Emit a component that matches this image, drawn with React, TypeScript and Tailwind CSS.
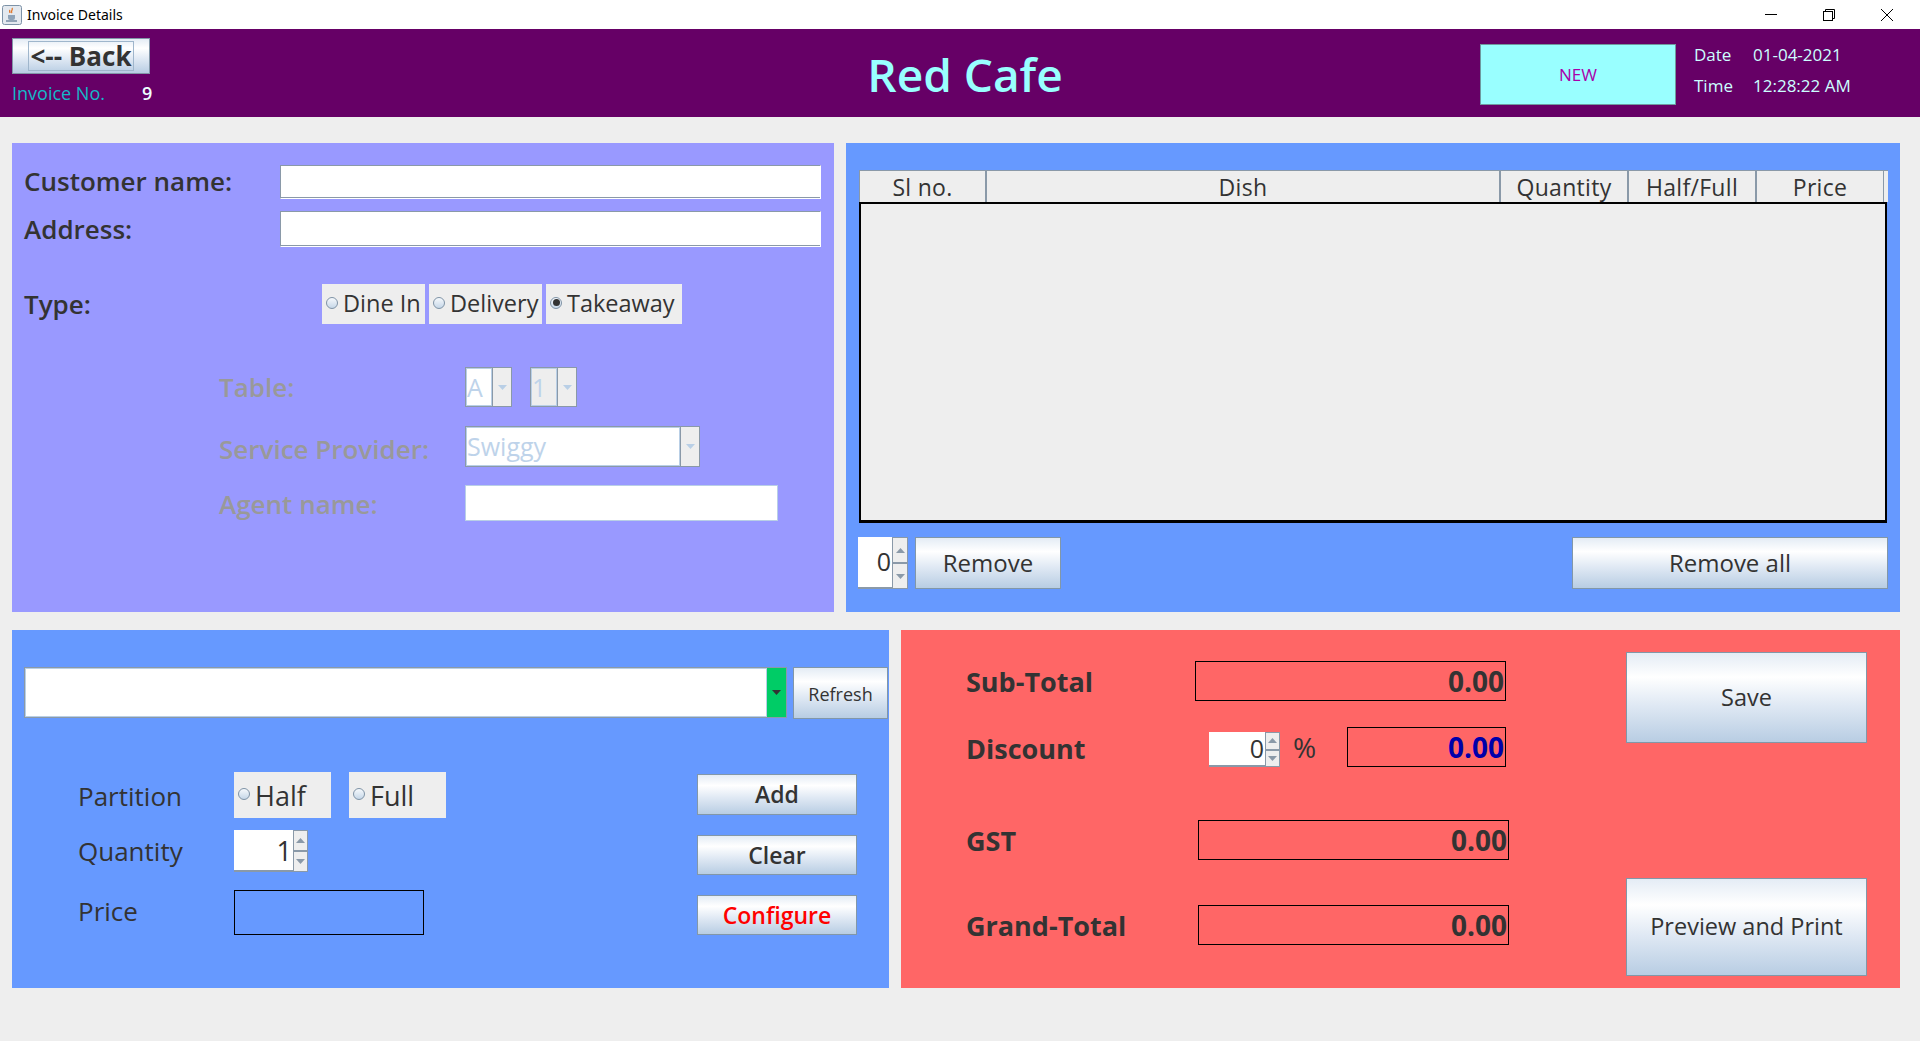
import type { ReactNode } from "react";

const glossy =
  "bg-[linear-gradient(180deg,#e4ecf5_0%,#ffffff_27%,#e0e9f4_58%,#b8cde3_100%)] border border-[#8297a8]";

const Btn = ({ className, children }: { className: string; children: ReactNode }) => (
  <div className={`${glossy} flex items-center justify-center text-[#333333] whitespace-nowrap ${className}`}>{children}</div>
);

const Arrow = ({ up, color = "#8a99a8" }: { up?: boolean; color?: string }) => (
  <svg width="9" height="5" viewBox="0 0 9 5" className="block">
    <path d={up ? "M0 5 L4.5 0 L9 5 Z" : "M0 0 L9 0 L4.5 5 Z"} fill={color} />
  </svg>
);

const Radio = ({ checked }: { checked?: boolean }) => (
  <span className="w-[12px] h-[12px] rounded-full border border-[#7f93a6] bg-[linear-gradient(180deg,#f6f9fc,#c6d7e8)] flex items-center justify-center shrink-0 -mt-[3px]">
    {checked && <span className="w-[7px] h-[7px] rounded-full bg-[#333333]" />}
  </span>
);

const RadioBox = ({ label, className, checked }: { label: string; className: string; checked?: boolean }) => (
  <div className={`bg-[#eeeeee] flex items-center pl-[4px] gap-[5px] text-[#333333] whitespace-nowrap ${className}`}>
    <Radio checked={checked} />
    <span>{label}</span>
  </div>
);

const Spinner = ({ value, className, text, btn }: { value: string; className: string; text: string; btn: string }) => (
  <div className={`flex ${className}`}>
    <div className={`flex-1 bg-white border-b-2 border-b-[#8a99a8] flex items-center justify-end pr-[1px] text-[#333333] ${text}`}>
      {value}
    </div>
    <div className={`${btn} flex flex-col bg-[#eeeeee] border border-[#8a99a8]`}>
      <div className="flex-1 flex items-center justify-center border-b-2 border-b-[#8a99a8]">
        <Arrow up />
      </div>
      <div className="flex-1 flex items-center justify-center">
        <Arrow />
      </div>
    </div>
  </div>
);

const Combo = ({ value, className, grey }: { value: string; className: string; grey?: boolean }) => (
  <div className={`flex border border-[#8a99a8] text-[#bed3ea] text-[25px] font-normal leading-none ${className}`}>
    <div className={`flex-1 border border-[#b9cfe6] flex items-center ${grey ? "bg-[#eeeeee]" : "bg-white"}`}>{value}</div>
    <div className="w-[19px] bg-[#eeeeee] border-l border-[#8a99a8] flex items-center justify-center">
      <Arrow color="#b9cfe6" />
    </div>
  </div>
);

const Amount = ({ value, className, blue }: { value: string; className: string; blue?: boolean }) => (
  <div
    className={`border border-black h-[40px] flex items-center justify-end pr-[1px] text-[28px] font-bold leading-none ${blue ? "text-[#0000aa]" : "text-[#333333]"} ${className}`}
  >
    {value}
  </div>
);

const Field = ({ className }: { className: string }) => (
  <div className={`bg-white border border-white border-t-[#8a99a8] border-l-[#8a99a8] shadow-[inset_0_-1px_0_#8a99a8] ${className}`} />
);

const columns = [
  { name: "Sl no.", w: "w-[127px]" },
  { name: "Dish", w: "w-[514px]" },
  { name: "Quantity", w: "w-[128px]" },
  { name: "Half/Full", w: "w-[128px]" },
  { name: "Price", w: "w-[128px]" },
];

export default function App() {
  return (
    <div className="w-[1920px] h-[1041px] overflow-hidden bg-[#eeeeee] font-['Open_Sans',sans-serif] flex flex-col">
      {/* Window title bar */}
      <div className="h-[29px] bg-white flex items-center pl-[2px] pr-[4px]">
        <svg width="20" height="20" viewBox="0 0 20 20">
          <rect x="0.5" y="0.5" width="19" height="19" rx="2" fill="#e4e9ef" stroke="#7e93a8" />
          <path d="M6 10h7v3a2 2 0 0 1-2 2H8a2 2 0 0 1-2-2z" fill="#8fa3b8" />
          <path d="M4 16h11" stroke="#5b7690" strokeWidth="1.2" />
          <path d="M10 3c1.5 2-2 3 0 5M8 5c-1 1 0 2 0 3" stroke="#e0762a" strokeWidth="1.3" fill="none" />
        </svg>
        <span className="ml-[5px] font-['Noto_Sans',sans-serif] text-[14px] leading-none text-black">Invoice Details</span>
        <div className="ml-auto flex items-center h-full">
          <div className="w-[58px] flex justify-center">
            <svg width="12" height="12" viewBox="0 0 12 12"><path d="M0 5.5h12" stroke="#000" /></svg>
          </div>
          <div className="w-[58px] flex justify-center">
            <svg width="12" height="12" viewBox="0 0 12 12" fill="none" stroke="#000">
              <rect x="0.5" y="2.5" width="9" height="9" />
              <path d="M2.5 2.5v-2h9v9h-2" />
            </svg>
          </div>
          <div className="w-[58px] flex justify-center">
            <svg width="12" height="12" viewBox="0 0 12 12"><path d="M0 0l12 12M12 0L0 12" stroke="#000" /></svg>
          </div>
        </div>
      </div>

      {/* Purple header */}
      <div className="h-[88px] bg-[#660066] flex">
        <div className="w-[460px] pl-[12px] pt-[9px] flex flex-col">
          <Btn className="w-[138px] h-[36px] text-[26px] font-bold leading-none">
            <span className="border border-[#9fb6cc] w-[106px] h-[30px] flex items-center justify-center whitespace-nowrap">&lt;-- Back</span>
          </Btn>
          <div className="flex mt-[7px] text-[18px] leading-[24px]">
            <span className="w-[130px] text-[#14b8c8]">Invoice No.</span>
            <span className="text-[#eeffff] font-semibold">9</span>
          </div>
        </div>
        <div className="w-[1010px] flex items-center justify-center text-[46px] font-semibold text-[#99ffff] leading-none pt-[2px]">
          Red Cafe
        </div>
        <div className="ml-[10px] mt-[15px] w-[196px] h-[61px] bg-[#99ffff] border border-[#6f9a9f] flex items-center justify-center text-[#aa00aa] text-[17px]">
          NEW
        </div>
        <div className="ml-[18px] mt-[10px] text-[#ccffff] text-[17px] leading-[31px] font-medium">
          <div className="flex">
            <span className="w-[59px]">Date</span>
            <span>01-04-2021</span>
          </div>
          <div className="flex">
            <span className="w-[59px]">Time</span>
            <span>12:28:22 AM</span>
          </div>
        </div>
      </div>

      <div className="flex-1 pl-[12px] pt-[26px]">
        {/* Top row */}
        <div className="flex gap-[12px] h-[469px]">
          <div className="w-[822px] bg-[#9999ff] pt-[22px] text-[26px] leading-none font-semibold text-[#333333]">
            <div className="flex items-center h-[34px] pl-[12px]">
              <span className="w-[256px] pb-[3px]">Customer name:</span>
              <Field className="w-[541px] h-full" />
            </div>
            <div className="flex items-center h-[36px] mt-[12px] pl-[12px]">
              <span className="w-[256px]">Address:</span>
              <Field className="w-[541px] h-full" />
            </div>
            <div className="flex items-center h-[40px] mt-[37px] pl-[12px]">
              <span className="w-[298px]">Type:</span>
              <div className="flex gap-[4px] text-[23.5px] font-normal">
                <RadioBox label="Dine In" className="w-[103px] h-[40px]" />
                <RadioBox label="Delivery" className="w-[113px] h-[40px]" />
                <RadioBox label="Takeaway" className="w-[136px] h-[40px]" checked />
              </div>
            </div>
            <div className="flex items-center h-[40px] mt-[43px] pl-[207px] text-[#999999]">
              <span className="w-[246px]">Table:</span>
              <Combo value="A" className="w-[47px] h-full" />
              <Combo value="1" className="w-[47px] h-full ml-[18px]" grey />
            </div>
            <div className="flex items-center h-[41px] mt-[19px] pl-[207px] text-[#999999]">
              <span className="w-[246px] whitespace-nowrap pt-[4px]">Service Provider:</span>
              <Combo value="Swiggy" className="w-[235px] h-full" />
            </div>
            <div className="flex items-center h-[36px] mt-[18px] pl-[207px] text-[#999999]">
              <span className="w-[246px] pt-[2px]">Agent name:</span>
              <div className="w-[313px] h-full bg-white border border-[#b9cfe6]" />
            </div>
          </div>

          <div className="w-[1054px] bg-[#6699ff] pt-[27px] pl-[13px] pr-[12px]">
            <div className="w-[1029px]">
              <div className="flex h-[32px] bg-[#eeeeee] border-t border-[#8a99a8]">
                {columns.map((c) => (
                  <div
                    key={c.name}
                    className={`${c.w} border-x border-[#8a99a8] flex items-center justify-center text-[23px] tracking-[0.3px] text-[#333333] leading-none pt-[2px]`}
                  >
                    {c.name}
                  </div>
                ))}
              </div>
              <div className="w-[1028px] h-[321px] bg-[#eeeeee] border-2 border-black border-b-[3px]" />
            </div>
            <div className="flex h-[52px] mt-[14px] -ml-[1px] text-[24px]">
              <Spinner value="0" className="w-[50px] h-full" text="text-[25px]" btn="w-[16px]" />
              <Btn className="w-[146px] h-full ml-[7px]">Remove</Btn>
              <Btn className="w-[316px] h-full ml-auto">Remove all</Btn>
            </div>
          </div>
        </div>

        {/* Bottom row */}
        <div className="flex gap-[12px] h-[358px] mt-[18px]">
          <div className="w-[877px] bg-[#6699ff] pt-[37px] pl-[12px] text-[#333333]">
            <div className="flex">
              <div className="w-[763px] h-[51px] flex border border-[#8a99a8]">
                <div className="flex-1 bg-white border border-[#b9cfe6]" />
                <div className="w-[19px] bg-[#00cc66] flex items-center justify-center">
                  <Arrow color="#333333" />
                </div>
              </div>
              <Btn className="w-[95px] h-[52px] ml-[6px] text-[18px] pt-[2px]">Refresh</Btn>
            </div>
            <div className="flex mt-[53px] pr-[32px]">
              <div className="text-[26px] leading-none font-normal">
                <div className="flex items-center h-[46px] pl-[54px]">
                  <span className="w-[156px] pt-[2px]">Partition</span>
                  <RadioBox label="Half" className="w-[97px] h-full text-[27px]" />
                  <RadioBox label="Full" className="w-[97px] h-full ml-[18px] text-[27px]" />
                </div>
                <div className="flex items-center h-[42px] mt-[12px] pl-[54px]">
                  <span className="w-[156px]">Quantity</span>
                  <Spinner value="1" className="w-[74px] h-full" text="text-[27px]" btn="w-[15px]" />
                </div>
                <div className="flex items-center h-[45px] mt-[18px] pl-[54px]">
                  <span className="w-[156px] pb-[3px]">Price</span>
                  <div className="w-[190px] h-full border border-black" />
                </div>
              </div>
              <div className="ml-auto pt-[2px] text-[23px] font-semibold leading-none">
                <Btn className="w-[160px] h-[41px]">Add</Btn>
                <Btn className="w-[160px] h-[40px] mt-[20px]">Clear</Btn>
                <Btn className="w-[160px] h-[40px] mt-[20px] !text-[#ff0000]">Configure</Btn>
              </div>
            </div>
          </div>

          <div className="w-[999px] bg-[#ff6666] flex text-[#333333]">
            <div className="w-[725px] pl-[65px] pt-[31px] text-[27px] font-bold leading-none">
              <div className="flex items-center">
                <span className="w-[229px]">Sub-Total</span>
                <Amount value="0.00" className="w-[311px]" />
              </div>
              <div className="flex items-center mt-[26px]">
                <span className="w-[243px] pt-[3px]">Discount</span>
                <Spinner value="0" className="w-[71px] h-[35px] self-end" text="text-[25px] font-normal" btn="w-[15px]" />
                <span className="w-[67px] pl-[13px] text-[28px] font-normal">%</span>
                <Amount value="0.00" className="w-[159px]" blue />
              </div>
              <div className="flex items-center mt-[53px]">
                <span className="w-[232px]">GST</span>
                <Amount value="0.00" className="w-[311px]" />
              </div>
              <div className="flex items-center mt-[45px]">
                <span className="w-[232px]">Grand-Total</span>
                <Amount value="0.00" className="w-[311px]" />
              </div>
            </div>
            <div className="text-[23.5px] leading-none">
              <Btn className="w-[241px] h-[91px] mt-[22px]">Save</Btn>
              <Btn className="w-[241px] h-[98px] mt-[135px]">Preview and Print</Btn>
            </div>
          </div>
        </div>
      </div>
    </div>
  );
}
